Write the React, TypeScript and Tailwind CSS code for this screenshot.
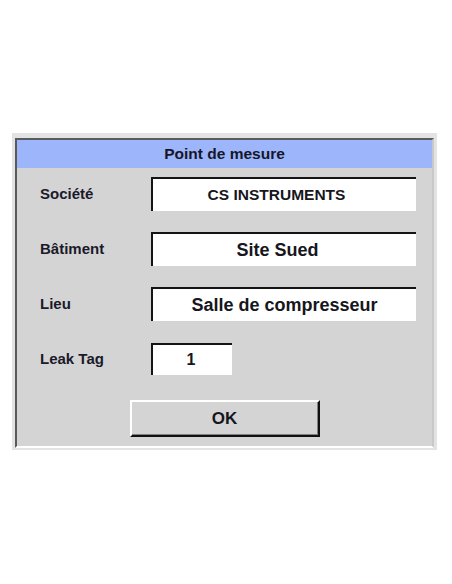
import React from "react";

const font = { fontFamily: '"Liberation Sans", Arial, sans-serif' };

function Field({ label, value, size, labelSize, wide = true, shift = "" }: { label: string; value: string; size: string; labelSize: string; wide?: boolean; shift?: string }) {
  return (
    <div className="flex items-center">
      <div className={`w-[111px] font-bold text-[#1a1a2a] ${labelSize}`}>{label}</div>
      <div
        className={`${wide ? "w-[265px] h-[34px]" : "w-[81px] h-[32px]"} bg-white border-t-2 border-l-2 border-t-[#141414] border-l-[#141414] flex items-center justify-center font-bold text-[#161620] ${size} ${shift}`}
      >
        {value}
      </div>
    </div>
  );
}

export default function App() {
  return (
    <div className="w-[452px] h-[584px] bg-white overflow-hidden" style={font}>
      <div className="ml-[12px] mt-[133px] w-[425px] bg-[#e3e3e3] pt-[5px] pl-[3px] pr-[3px] pb-[2px]">
        <div className="border-t-2 border-l-2 border-[#5a5a5a] border-r-2 border-r-[#c8c8c8] border-b-2 border-b-white bg-[#d4d4d4]">
          <div className="h-[28px] bg-[#9db6fb] flex items-center justify-center font-bold text-[15.5px] text-[#161628]">
            Point de mesure
          </div>
          <div className="pl-[23px] pt-[9px] pb-[9px] flex flex-col">
            <Field label="Société" value="CS INSTRUMENTS" size="text-[15.5px]" labelSize="text-[15px]" shift="pr-[16px]" />
            <div className="h-[21px]" />
            <Field label="Bâtiment" value="Site Sued" size="text-[18px]" labelSize="text-[15px]" shift="pr-[14px]" />
            <div className="h-[21px]" />
            <Field label="Lieu" value="Salle de compresseur" size="text-[18px]" labelSize="text-[15px]" />
            <div className="h-[22px]" />
            <Field label="Leak Tag" value="1" size="text-[16px]" labelSize="text-[15px]" wide={false} shift="pr-[3px]" />
            <div className="h-[25px]" />
            <div className="flex justify-center pr-[23px]">
              <div className="w-[190px] h-[37px] border-t-2 border-l-2 border-white border-r-2 border-b-2 border-r-[#111] border-b-[#111] bg-[#d4d4d4] flex items-center justify-center font-bold text-[17px] text-[#161620] shadow-[inset_-1px_-1px_0_#808080]">
                OK
              </div>
            </div>
          </div>
        </div>
      </div>
    </div>
  );
}
